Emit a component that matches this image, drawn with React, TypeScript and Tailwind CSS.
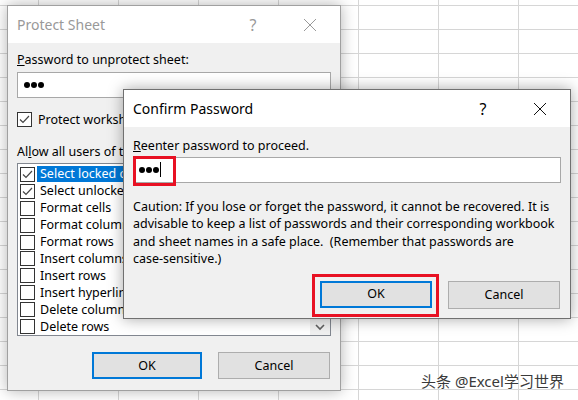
import React from "react";

const FONT = { fontFamily: '"Noto Sans", "Noto Sans CJK SC", sans-serif' };

function Check() {
  return (
    <svg width="13" height="13" viewBox="0 0 13 13" className="block">
      <polyline points="2,6.5 5,9.5 11,3" fill="none" stroke="#444" strokeWidth="1.2" />
    </svg>
  );
}

function Box({ checked }: { checked?: boolean }) {
  return (
    <div className="w-[15px] h-[15px] border border-[#333] bg-white flex items-center justify-center shrink-0">
      {checked ? <Check /> : null}
    </div>
  );
}

function Dots() {
  return (
    <div className="flex items-center gap-[1px]">
      <span className="w-[6px] h-[6px] rounded-full bg-black" />
      <span className="w-[6px] h-[6px] rounded-full bg-black" />
      <span className="w-[6px] h-[6px] rounded-full bg-black" />
    </div>
  );
}

function CloseX({ color }: { color: string }) {
  return (
    <svg width="14" height="14" viewBox="0 0 14 14" className="block">
      <path d="M1 1 L13 13 M13 1 L1 13" stroke={color} strokeWidth="1" fill="none" />
    </svg>
  );
}

const items = [
  "Select locked cells",
  "Select unlocked cells",
  "Format cells",
  "Format columns",
  "Format rows",
  "Insert columns",
  "Insert rows",
  "Insert hyperlinks",
  "Delete columns",
  "Delete rows",
];

export default function App() {
  return (
    <div
      className="relative w-[578px] h-[400px] overflow-hidden bg-white [background-image:linear-gradient(to_right,#d6d6d6_1px,transparent_1px),linear-gradient(to_bottom,#d6d6d6_1px,transparent_1px)] [background-size:80px_24px] [background-position:38px_5px]"
      style={FONT}
    >
      {/* Protect Sheet dialog */}
      <div className="absolute left-[7px] top-[5px] w-[334px] h-[386px] border border-[#a0a0a0] bg-[#f0f0f0] flex flex-col shadow-[0_0_14px_rgba(0,0,0,0.3)]">
        <div className="h-[37px] bg-white flex items-center pl-[9px] shrink-0">
          <span className="text-[14px] text-[#999]">Protect Sheet</span>
          <div className="ml-auto flex items-center">
            <span className="text-[16px] text-[#999] w-[20px] text-center">?</span>
            <div className="ml-[40px] mr-[23px]">
              <CloseX color="#999" />
            </div>
          </div>
        </div>
        <div className="flex flex-col px-[9px] pt-[9px] text-[12.5px] text-black leading-[16px]">
          <div>
            <span className="underline">P</span>assword to unprotect sheet:
          </div>
          <div className="mt-[4px] h-[26px] w-[314px] border border-[#a8a8a8] bg-white flex items-center pl-[6px]">
            <Dots />
          </div>
          <div className="mt-[14px] flex items-center gap-[6px] h-[15px]">
            <Box checked />
            <span>Protect worksheet and contents of locked cells</span>
          </div>
          <div className="mt-[17px]">
            Al<span className="underline">l</span>ow all users of this worksheet to:
          </div>
          <div className="mt-[3px] h-[173px] w-[314px] border border-[#828790] bg-white flex">
            <div className="flex-1 flex flex-col pt-[2px] pl-[2px]">
              {items.map((t, i) => (
                <div key={t} className="h-[17px] flex items-center">
                  <Box checked={i < 2} />
                  <span
                    className={
                      i === 0
                        ? "ml-[2px] pl-[3px] pr-[2px] h-[16px] flex items-center bg-[#0078d7] text-white"
                        : "ml-[2px] pl-[3px]"
                    }
                  >
                    {t}
                  </span>
                </div>
              ))}
            </div>
            <div className="w-[20px] bg-[#f0f0f0] flex flex-col justify-end items-center pb-[4px]">
              <svg width="10" height="7" viewBox="0 0 10 7" className="block">
                <path d="M1 1 L5 5 L9 1" stroke="#606060" strokeWidth="1.6" fill="none" />
              </svg>
            </div>
          </div>
          <div className="mt-[16px] flex justify-end gap-[16px] pr-[1px]">
            <div className="w-[110px] h-[27px] border-2 border-[#0078d7] bg-[#e1e1e1] flex items-center justify-center">
              OK
            </div>
            <div className="w-[112px] h-[27px] border border-[#adadad] bg-[#e1e1e1] flex items-center justify-center">
              Cancel
            </div>
          </div>
        </div>
      </div>

      {/* Confirm Password dialog */}
      <div className="absolute left-[123px] top-[89px] w-[448px] h-[230px] border border-[#707070] bg-[#f0f0f0] flex flex-col shadow-[0_0_14px_rgba(0,0,0,0.35)]">
        <div className="h-[37px] bg-white flex items-center pl-[9px] shrink-0">
          <span className="text-[14px] text-black">Confirm Password</span>
          <div className="ml-auto flex items-center">
            <span className="text-[16px] text-black w-[20px] text-center">?</span>
            <div className="ml-[40px] mr-[23px]">
              <CloseX color="#111" />
            </div>
          </div>
        </div>
        <div className="flex flex-col pl-[9px] pr-[10px] pt-[10px] text-[12.5px] text-black leading-[17.5px]">
          <div>
            <span className="underline">R</span>eenter password to proceed.
          </div>
          <div className="relative mt-[2px] h-[26px] w-[428px] border border-[#a8a8a8] bg-white flex items-center pl-[5px]">
            <Dots />
            <span className="ml-[1px] w-[1px] h-[15px] bg-black" />
            <div className="absolute left-[-1px] top-[-2px] w-[43px] h-[30px] border-[3px] border-[#e81123]" />
          </div>
          <div className="mt-[15px]">
            Caution: If you lose or forget the password, it cannot be recovered. It is
            <br />
            advisable to keep a list of passwords and their corresponding workbook
            <br />
            and sheet names in a safe place.&nbsp; (Remember that passwords are
            <br />
            case-sensitive.)
          </div>
          <div className="mt-[13px] flex justify-end gap-[16px]">
            <div className="relative w-[112px] h-[27px] border-2 border-[#0078d7] bg-[#e1e1e1] flex items-center justify-center">
              OK
              <div className="absolute left-[-10px] top-[-9px] right-[-9px] bottom-[-11px] border-[3px] border-[#e81123]" />
            </div>
            <div className="w-[112px] h-[28px] border border-[#adadad] bg-[#e1e1e1] flex items-center justify-center">
              Cancel
            </div>
          </div>
        </div>
      </div>

      {/* watermark */}
      <div className="absolute left-[421px] top-[370px] text-[15px] text-[#3a3a3a] [text-shadow:0_0_2px_#fff,0_0_2px_#fff]">
        头条 @Excel学习世界
      </div>
    </div>
  );
}
